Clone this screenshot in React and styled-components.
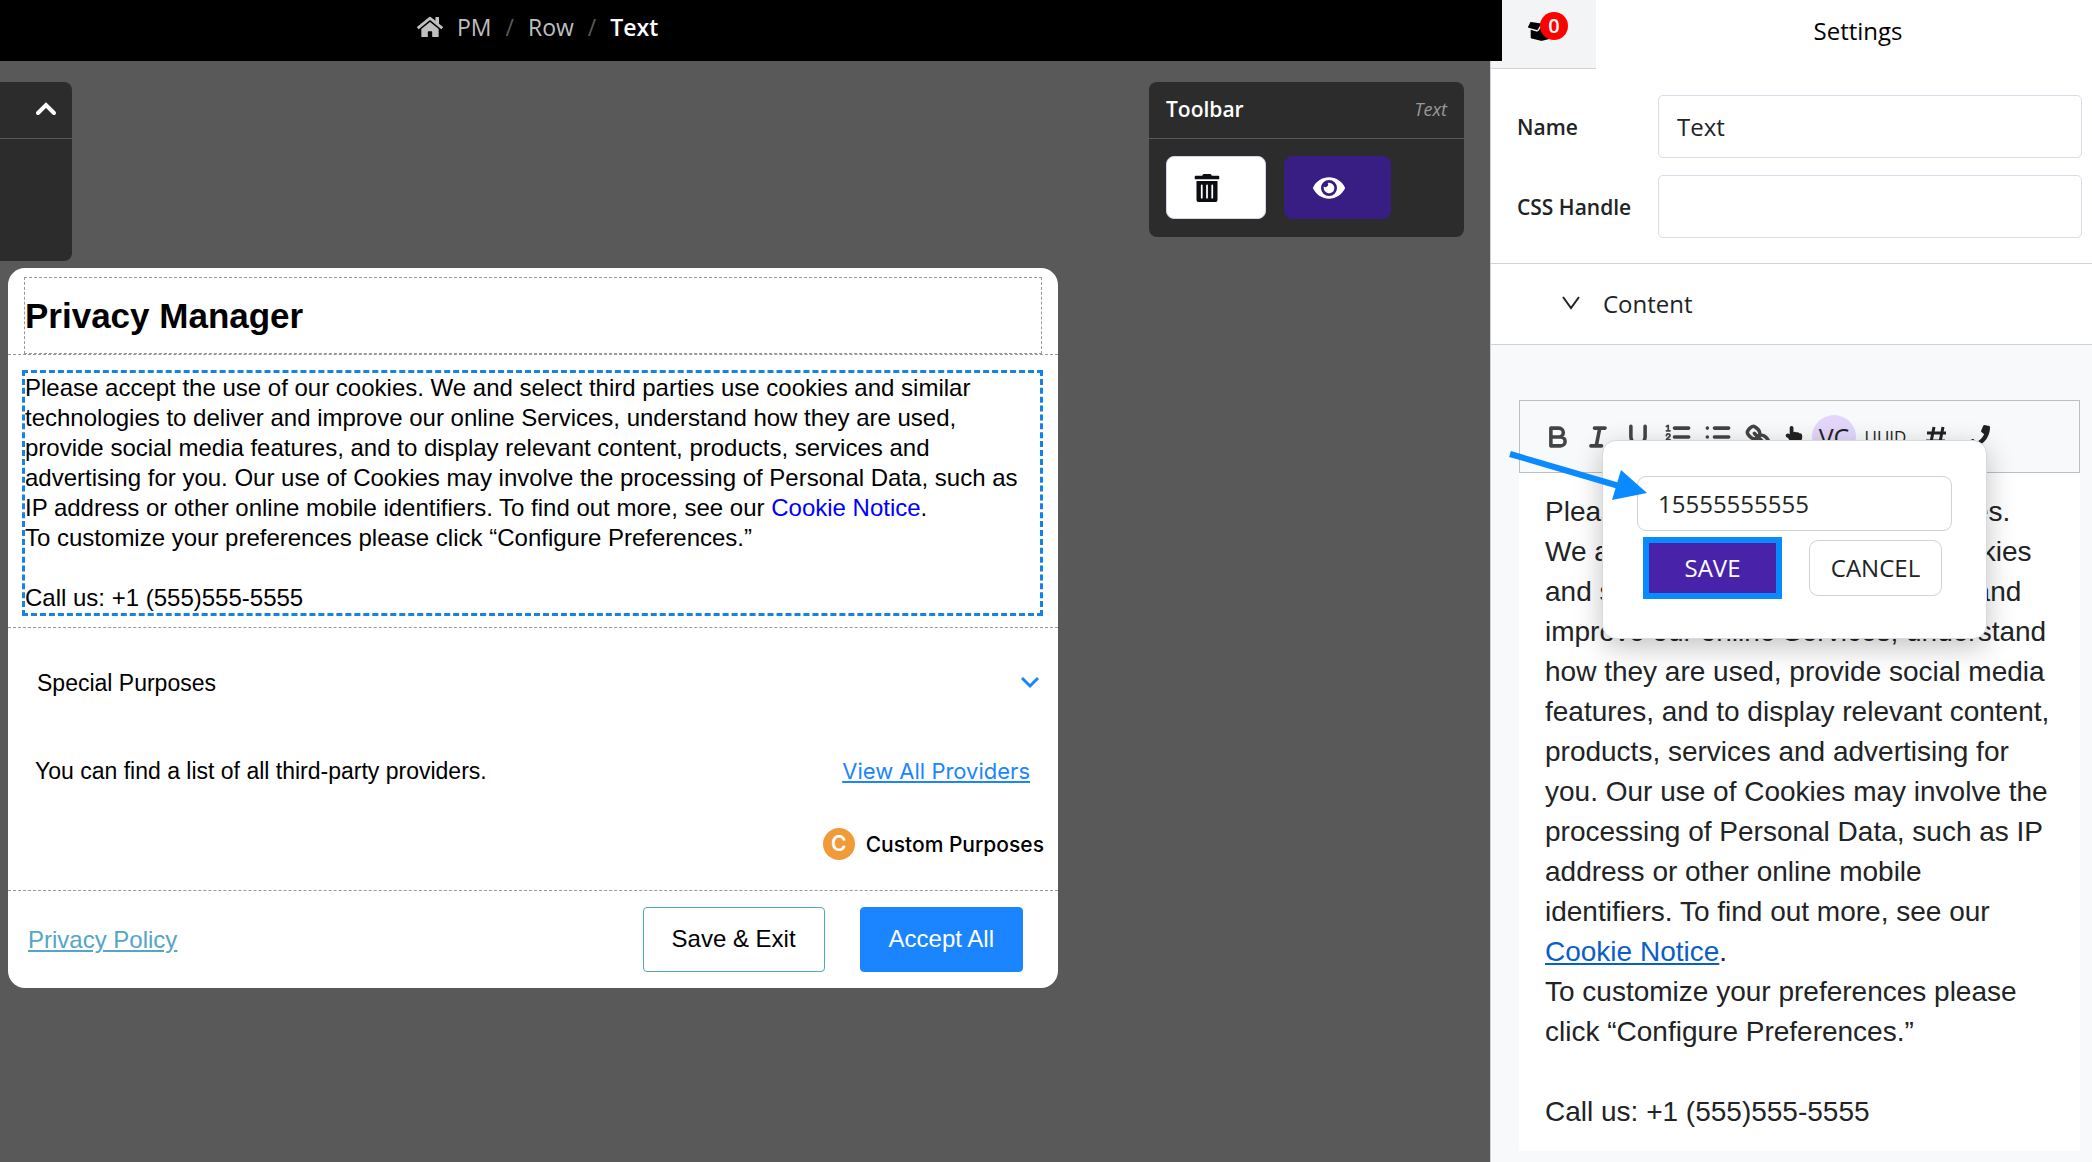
import { useState } from 'react';
import styled, { createGlobalStyle } from 'styled-components';
import { FaHome, FaBoxOpen, FaEye, FaTrashAlt, FaHandPointUp, FaPhone } from 'react-icons/fa';

const SANS = "'Open Sans', 'Noto Sans', sans-serif";
const ARIAL = "'Liberation Sans', Arial, sans-serif";

const GlobalStyles = createGlobalStyle`
  * {
    box-sizing: border-box;
  }

  body {
    background: #595959;
    color: #212325;
    font-family: ${SANS};
    margin: 0;
  }

  button, input {
    font-family: inherit;
  }
`;

const messageStart = 'Please accept the use of our cookies. We and select third parties use cookies and similar technologies to deliver and improve our online Services, understand how they are used, provide social media features, and to display relevant content, products, services and advertising for you. Our use of Cookies may involve the processing of Personal Data, such as IP address or other online mobile identifiers. To find out more, see our ';

const Message = () => (
  <>
    {messageStart}<a href='#cookie-notice'>Cookie Notice</a>.<br/>
    To customize your preferences please click “Configure Preferences.”<br/>
    <br/>
    Call us: +1 (555)555-5555
  </>
);

const Breadcrumb = () => (
  <TopBar aria-label='Breadcrumb'>
    <Crumb href='#pm'><FaHome size={26}/>PM</Crumb>
    <Slash>/</Slash>
    <Crumb href='#row'>Row</Crumb>
    <Slash>/</Slash>
    <Crumb href='#text' $active>Text</Crumb>
  </TopBar>
);

const PrivacyManager = () => (
  <Modal>
    <ModalTitle>
      <TitleBox>Privacy Manager</TitleBox>
    </ModalTitle>
    <MessageRow>
      <SelectedText><Message/></SelectedText>
    </MessageRow>
    <PurposesRow>
      <Accordion type='button'>
        Special Purposes
        <svg width='20' height='14' viewBox='0 0 20 14' fill='none' stroke='#1a85ff' strokeWidth='3'>
          <path d='M2 2 L10 10 L18 2'/>
        </svg>
      </Accordion>
      <Providers>
        <span>You can find a list of all third-party providers.</span>
        <a href='#providers'>View All Providers</a>
      </Providers>
      <Legend>
        <LegendBadge>C</LegendBadge>
        Custom Purposes
      </Legend>
    </PurposesRow>
    <ModalFooter>
      <PolicyLink href='#policy'>Privacy Policy</PolicyLink>
      <ActionButton type='button'>Save &amp; Exit</ActionButton>
      <ActionButton type='button' $primary>Accept All</ActionButton>
    </ModalFooter>
  </Modal>
);

const PhonePopover = () => {
  const [phone, setPhone] = useState('15555555555');

  return (
    <Popover>
      <PhoneInput
        aria-label='Phone number'
        value={phone}
        onChange={(e) => setPhone(e.target.value)}/>
      <PopoverActions>
        <SaveButton type='button'>SAVE</SaveButton>
        <CancelButton type='button'>CANCEL</CancelButton>
      </PopoverActions>
      <Arrow width='140' height='56' viewBox='0 0 140 56'>
        <path d='M1 5 L110 37' stroke='#0a8aff' strokeWidth='6'/>
        <path d='M112 21 L138 44 L103 51 Z' fill='#0a8aff'/>
      </Arrow>
    </Popover>
  );
};

const QuillIcon = ({ children }) => (
  <svg
    width='32'
    height='32'
    viewBox='0 0 18 18'
    fill='none'
    stroke='#444444'
    strokeWidth='2'
    strokeLinecap='round'
    strokeLinejoin='round'>
    {children}
  </svg>
);

const EditorTools = () => (
  <Tools>
    <ToolGroup $gap='8px'>
      <Tool type='button' aria-label='Bold'>
        <QuillIcon><path d='M5 4h4.5a2.5 2.5 0 0 1 0 5H5zM5 9h5.500a2.5 2.5 0 0 1 0 5H5z'/></QuillIcon>
      </Tool>
      <Tool type='button' aria-label='Italic'>
        <QuillIcon><path d='M7 4h6M5 14h6M8 14l2-10'/></QuillIcon>
      </Tool>
      <Tool type='button' aria-label='Underline'>
        <QuillIcon><path d='M5 3v6a4 4 0 0 0 8 0V3M4 16h10'/></QuillIcon>
      </Tool>
      <Tool type='button' aria-label='Ordered list'>
        <QuillIcon>
          <path d='M7 4h8M7 9h8M7 14h8'/>
          <path strokeWidth='1' d='M2.500 5.500h2M3.500 5.500v-3l-1 .5M4.500 10.500h-2c0-1 2-1.300 2-2.300a1 1 0 0 0-2 0'/>
        </QuillIcon>
      </Tool>
      <Tool type='button' aria-label='Bullet list'>
        <QuillIcon><path d='M7 4h8M7 9h8M7 14h8M3 4h.01M3 9h.01M3 14h.01'/></QuillIcon>
      </Tool>
      <Tool type='button' aria-label='Link'>
        <QuillIcon>
          <path d='M7 7l4 4'/>
          <path d='M8.900 4.577a3.476 3.476 0 0 1 .36 4.679A3.476 3.476 0 0 1 4.577 8.900C3.185 7.500 2.035 6.400 4.217 4.217S7.500 3.185 8.900 4.577Z'/>
          <path d='M13.423 9.100a3.476 3.476 0 0 0-4.679-.36 3.476 3.476 0 0 0 .36 4.679c1.392 1.392 2.500 2.542 4.679.36S14.815 10.500 13.423 9.100Z'/>
        </QuillIcon>
      </Tool>
    </ToolGroup>
    <ToolGroup $gap='9px'>
      <Tool type='button' aria-label='Action' $width='18px'><FaHandPointUp size={22}/></Tool>
      <RoundTool type='button' $width='44px'>VC</RoundTool>
      <SmallTool type='button' $width='41px'>UUID</SmallTool>
      <Tool type='button' aria-label='Number' $width='42px'>
        <svg width='28' height='28' viewBox='0 0 28 28' fill='none' stroke='#222222' strokeWidth='3'>
          <path d='M12 4L8 24M21 4l-4 20M5 10h19M4 18h19'/>
        </svg>
      </Tool>
      <Tool type='button' aria-label='Phone' $width='24px'><FaPhone size={23}/></Tool>
    </ToolGroup>
  </Tools>
);

const Settings = () => {
  const [name, setName] = useState('Text');
  const [handle, setHandle] = useState('');

  return (
    <SidePanel>
      <PanelTop>
        <CartTab type='button'>
          <FaBoxOpen size={27}/>
          <Count>0</Count>
        </CartTab>
        <PanelTitle>Settings</PanelTitle>
      </PanelTop>
      <Fields>
        <Label htmlFor='name'>Name</Label>
        <Input id='name' value={name} onChange={(e) => setName(e.target.value)}/>
        <Label htmlFor='handle'>CSS Handle</Label>
        <Input id='handle' value={handle} onChange={(e) => setHandle(e.target.value)}/>
      </Fields>
      <SectionToggle type='button'>
        <svg width='18' height='14' viewBox='0 0 18 14' fill='none' stroke='#222222' strokeWidth='2'>
          <path d='M1 1 L9 12 L17 1'/>
        </svg>
        Content
      </SectionToggle>
      <EditorArea>
        <EditorTools/>
        <PhonePopover/>
        <EditorText><Message/></EditorText>
      </EditorArea>
    </SidePanel>
  );
};

const App = () => (
  <>
    <GlobalStyles/>
    <Page>
      <Workspace>
        <Breadcrumb/>
        <Canvas>
          <PanelsRow>
            <CollapsedPanel>
              <PanelHeader>
                <CollapseButton type='button' aria-label='Collapse'>
                  <svg width='22' height='14' viewBox='0 0 22 14' fill='none' stroke='#ffffff' strokeWidth='4' strokeLinecap='round'>
                    <path d='M3 11 L11 3 L19 11'/>
                  </svg>
                </CollapseButton>
              </PanelHeader>
            </CollapsedPanel>
            <Toolbar>
              <PanelHeader>
                Toolbar
                <em>Text</em>
              </PanelHeader>
              <ToolbarButtons>
                <ToolbarButton type='button' aria-label='Delete'><FaTrashAlt size={28}/></ToolbarButton>
                <ToolbarButton type='button' aria-label='Preview' $purple><FaEye size={32}/></ToolbarButton>
              </ToolbarButtons>
            </Toolbar>
          </PanelsRow>
          <PrivacyManager/>
        </Canvas>
      </Workspace>
      <Settings/>
    </Page>
  </>
);

export default App;

const Page = styled.div`
  display: flex;
  min-height: 100vh;
`;

const Workspace = styled.div`
  flex: 1;
  min-width: 0;
`;

const TopBar = styled.nav`
  align-items: center;
  background: #000000;
  display: flex;
  font-size: 23px;
  gap: 14px;
  height: 61px;
  margin-right: -12px;
  padding: 0 0 8px 417px;
  position: relative;
  z-index: 1;
`;

const Crumb = styled.a`
  align-items: center;
  color: ${({ $active }) => $active ? '#ffffff' : '#bfbfbf'};
  display: flex;
  font-weight: ${({ $active }) => $active ? '600' : '400'};
  gap: 14px;
  text-decoration: none;
`;

const Slash = styled.span`
  color: #595959;
`;

const Canvas = styled.main`
  padding-top: 21px;
`;

const PanelsRow = styled.div`
  align-items: flex-start;
  display: flex;
  justify-content: space-between;
  padding-right: 26px;
`;

const CollapsedPanel = styled.section`
  background: #2c2c2c;
  border-radius: 0 8px 8px 0;
  height: 179px;
  width: 72px;
`;

const PanelHeader = styled.header`
  align-items: center;
  border-bottom: 1px solid #595959;
  color: #ffffff;
  display: flex;
  font-size: 21px;
  font-weight: 600;
  height: 57px;
  justify-content: space-between;
  padding: 0 17px 2px;

  em {
    color: #999999;
    font-size: 18px;
    font-weight: 400;
  }
`;

const CollapseButton = styled.button`
  background: none;
  border: 0;
  display: flex;
  margin-left: auto;
  margin-right: -2px;
  padding: 0;
`;

const Toolbar = styled.section`
  background: #2c2c2c;
  border-radius: 8px;
  width: 315px;
`;

const ToolbarButtons = styled.div`
  display: flex;
  gap: 18px;
  padding: 17px 17px 18px;
`;

const ToolbarButton = styled.button`
  align-items: center;
  background: ${({ $purple }) => $purple ? '#381d82' : '#ffffff'};
  border: 1px solid ${({ $purple }) => $purple ? '#381d82' : '#d0d5e8'};
  border-radius: 8px;
  color: ${({ $purple }) => $purple ? '#ffffff' : '#0c0d12'};
  display: flex;
  height: 63px;
  justify-content: center;
  padding: 0 18px 0 0;
  width: ${({ $purple }) => $purple ? '107px' : '100px'};
`;

const Modal = styled.section`
  background: #ffffff;
  border-radius: 17px;
  color: #000000;
  font-family: ${ARIAL};
  margin: 7px 0 0 8px;
  max-width: 1050px;
`;

const ModalTitle = styled.header`
  border-bottom: 1px dashed #999999;
  padding: 9px 16px 0;
`;

const TitleBox = styled.h1`
  border: 1px dashed #999999;
  font-size: 35px;
  line-height: 75px;
  margin: 0;
`;

const MessageRow = styled.div`
  border-bottom: 1px dashed #999999;
  padding: 15px 15px 11px 14px;
`;

const SelectedText = styled.p`
  border: 3px dashed #1482e6;
  font-size: 24px;
  line-height: 30px;
  margin: 0;

  a {
    color: #0000ff;
    text-decoration: none;
  }
`;

const PurposesRow = styled.div`
  border-bottom: 1px dashed #999999;
  padding: 30px 14px 30px 27px;
`;

const Accordion = styled.button`
  align-items: center;
  background: none;
  border: 0;
  color: #000000;
  display: flex;
  font-size: 23px;
  justify-content: space-between;
  line-height: 50px;
  padding: 0 4px 0 2px;
  width: 100%;
`;

const Providers = styled.div`
  display: flex;
  font-size: 23px;
  justify-content: space-between;
  line-height: 50px;
  padding: 38px 14px 0 0;

  a {
    color: #1a85ff;
    font-family: Inter, sans-serif;
    font-size: 22px;
  }
`;

const Legend = styled.div`
  align-items: center;
  display: flex;
  font-family: Inter, sans-serif;
  font-size: 21px;
  font-weight: 500;
  gap: 11px;
  justify-content: flex-end;
  margin-top: 32px;
`;

const LegendBadge = styled.span`
  background: #f19b38;
  border-radius: 50%;
  color: #ffffff;
  font-weight: 600;
  line-height: 32px;
  text-align: center;
  width: 32px;
`;

const ModalFooter = styled.footer`
  align-items: center;
  display: flex;
  gap: 35px;
  padding: 16px 35px 16px 20px;
`;

const PolicyLink = styled.a`
  color: #53a6c5;
  font-size: 24px;
  margin-right: auto;
`;

const ActionButton = styled.button`
  background: ${({ $primary }) => $primary ? '#1a85ff' : '#ffffff'};
  border: 1px solid ${({ $primary }) => $primary ? '#1a85ff' : '#53a6c5'};
  border-radius: 4px;
  color: ${({ $primary }) => $primary ? '#ffffff' : '#000000'};
  font-size: 24px;
  height: 65px;
  padding: 0 28px 2px;
`;

const SidePanel = styled.aside`
  background: #f8f9fb;
  border-left: 1px solid #d0d3d6;
  flex: 0 0 602px;
`;

const PanelTop = styled.div`
  background: #ffffff;
  display: flex;
  height: 69px;
`;

const CartTab = styled.button`
  align-items: center;
  background: #f3f4f6;
  border: 0;
  border-bottom: 1px solid #d0d3d6;
  display: flex;
  padding: 0 0 6px 37px;
  position: relative;
  width: 105px;
`;

const Count = styled.span`
  background: #ff0000;
  border-radius: 50%;
  color: #ffffff;
  font-size: 20px;
  font-weight: 600;
  left: 49px;
  line-height: 28px;
  position: absolute;
  top: 12px;
  width: 28px;
`;

const PanelTitle = styled.h2`
  color: #000000;
  flex: 1;
  font-size: 24px;
  font-weight: 400;
  line-height: 62px;
  margin: 0;
  padding-left: 28px;
  text-align: center;
`;

const Fields = styled.div`
  align-items: center;
  background: #ffffff;
  border-bottom: 1px solid #d0d3d6;
  display: grid;
  gap: 17px 0;
  grid-template-columns: 141px 1fr;
  padding: 26px 10px 25px 26px;
`;

const Label = styled.label`
  font-size: 21px;
  font-weight: 600;
`;

const Input = styled.input`
  background: #ffffff;
  border: 1px solid #d5dfe8;
  border-radius: 5px;
  color: #212325;
  font-size: 24px;
  height: 63px;
  min-width: 0;
  padding: 0 18px;
`;

const SectionToggle = styled.button`
  align-items: center;
  background: #ffffff;
  border: 0;
  border-bottom: 1px solid #d0d3d6;
  color: #212325;
  display: flex;
  font-size: 24px;
  gap: 23px;
  height: 81px;
  padding: 0 71px 2px;
  width: 100%;
`;

const EditorArea = styled.div`
  padding: 55px 12px 10px 28px;
  position: relative;
`;

const Tools = styled.div`
  border: 1px solid #bcbec0;
  display: flex;
  gap: 11px;
  height: 73px;
  padding: 0 22px;
`;

const ToolGroup = styled.div`
  align-items: center;
  display: flex;
  gap: ${({ $gap }) => $gap};
`;

const Tool = styled.button`
  align-items: center;
  background: none;
  border: 0;
  color: #222222;
  display: flex;
  height: 32px;
  justify-content: center;
  padding: 0;
  width: ${({ $width }) => $width || '32px'};
`;

const RoundTool = styled(Tool)`
  background: #e2d6fb;
  border-radius: 50%;
  font-size: 25px;
  height: 44px;
`;

const SmallTool = styled(Tool)`
  font-size: 17px;
`;

const EditorText = styled.div`
  background: #ffffff;
  font-family: ${ARIAL};
  font-size: 28px;
  line-height: 40px;
  padding: 19px 26px;

  a {
    color: #0a5ec7;
  }
`;

const Popover = styled.div`
  background: #ffffff;
  border: 1px solid #d5dade;
  border-radius: 14px;
  box-shadow: 0 8px 28px rgba(0, 0, 0, 0.24);
  left: 111px;
  padding: 35px 34px 39px;
  position: absolute;
  top: 95px;
  width: 385px;
`;

const PhoneInput = styled.input`
  border: 1px solid #cdd3d8;
  border-radius: 9px;
  color: #212325;
  display: block;
  font-size: 24px;
  height: 55px;
  margin-bottom: 6px;
  padding: 0 20px;
  width: 100%;
`;

const PopoverActions = styled.div`
  align-items: center;
  display: flex;
  gap: 27px;
  padding: 0 6px;
`;

const SaveButton = styled.button`
  background: #4823a9;
  border: 6px solid #0a8aff;
  color: #ffffff;
  font-size: 24px;
  height: 62px;
  padding: 0 0 2px;
  width: 139px;
`;

const CancelButton = styled.button`
  background: #ffffff;
  border: 1px solid #cdd3d8;
  border-radius: 9px;
  color: #212325;
  font-size: 24px;
  height: 56px;
  padding: 0 0 2px;
  width: 133px;
`;

const Arrow = styled.svg`
  left: -94px;
  position: absolute;
  top: 8px;
`;
